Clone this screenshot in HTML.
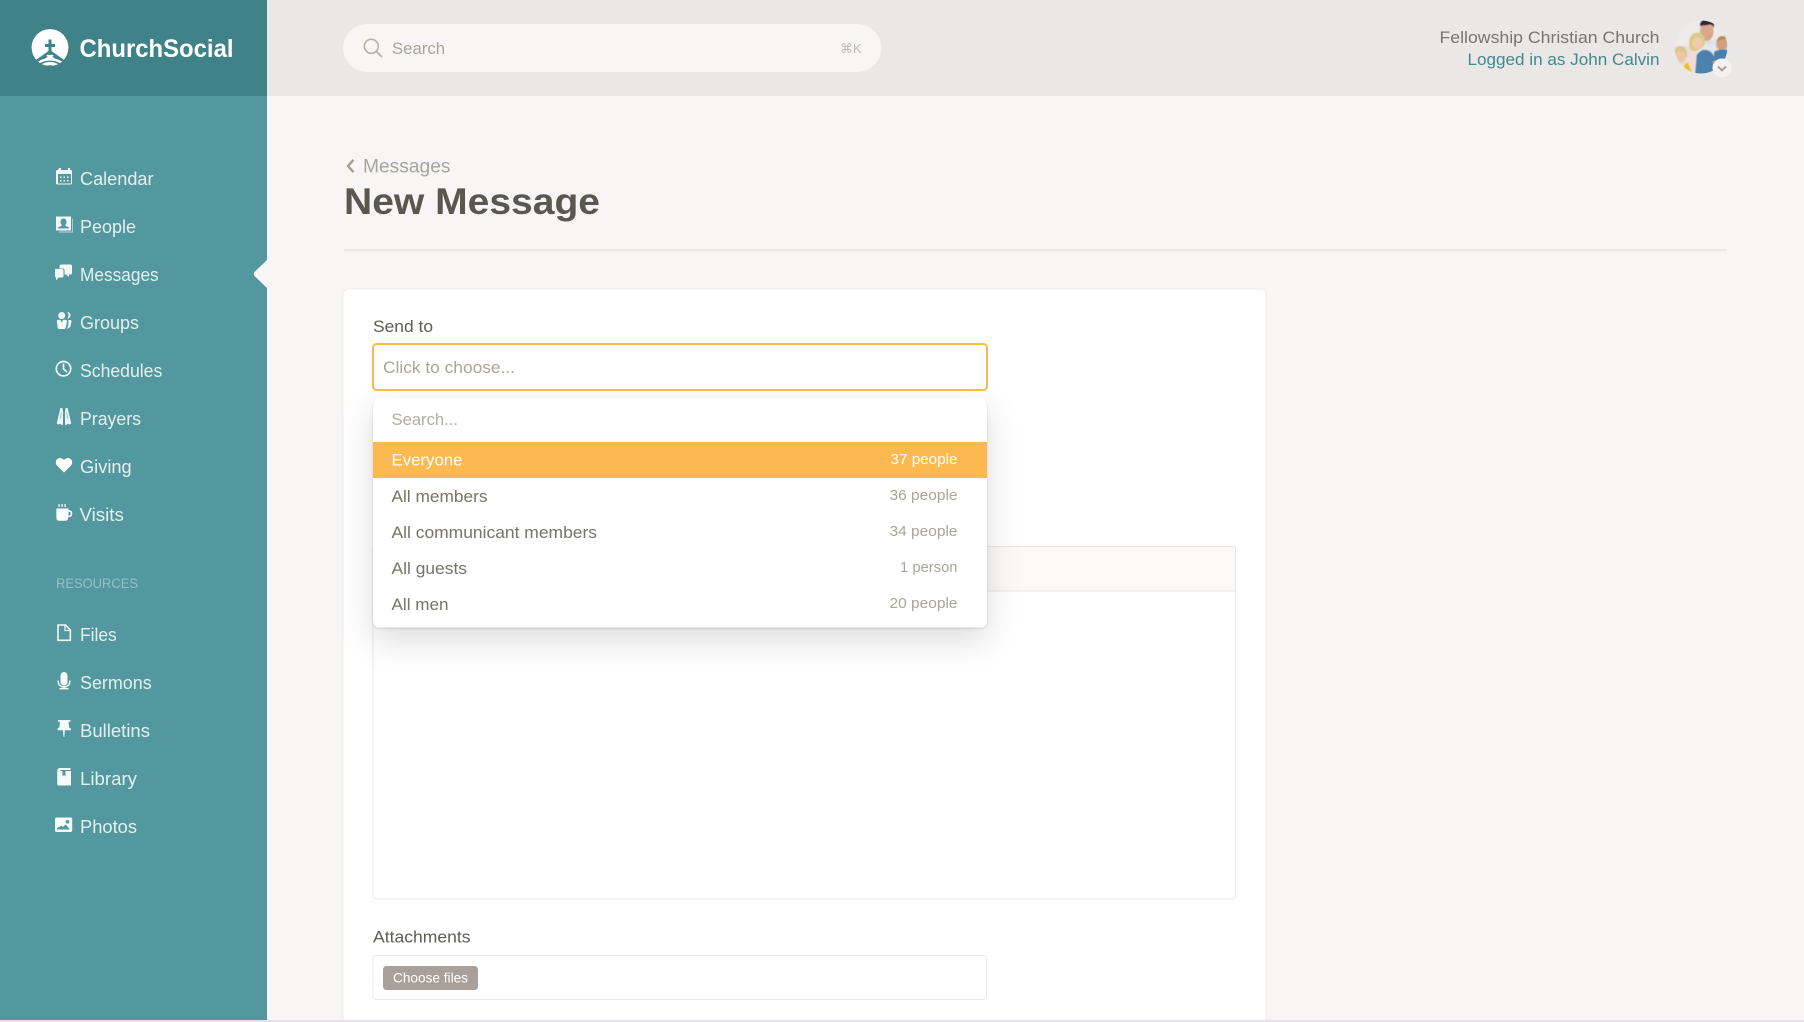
<!DOCTYPE html>
<html lang="en">
<head>
<meta charset="utf-8">
<title>New Message</title>
<style>
html,body{margin:0;padding:0;width:1804px;height:1022px;overflow:hidden;background:#f7f6f4}
svg{display:block}
text{font-family:"Liberation Sans","DejaVu Sans",sans-serif}
.nav{font-size:18px;fill:#e4efef}
.dim{font-size:17px;fill:#77726b}
.cnt{font-size:15px;fill:#aaa49c}
</style>
</head>
<body>
<svg width="1804" height="1022" viewBox="0 0 1804 1022" xmlns="http://www.w3.org/2000/svg">
<defs>
<filter id="dd" x="-15%" y="-20%" width="130%" height="160%">
<feDropShadow dx="0" dy="1" stdDeviation="1" flood-color="#000" flood-opacity=".14"/>
<feDropShadow dx="0" dy="12" stdDeviation="16" flood-color="#000" flood-opacity=".14"/>
</filter>
<filter id="cs" x="-5%" y="-5%" width="110%" height="110%">
<feDropShadow dx="0" dy="0" stdDeviation="1.200" flood-color="#000" flood-opacity=".09"/>
</filter>
<filter id="soft"><feGaussianBlur stdDeviation=".4"/></filter>
<clipPath id="av"><circle cx="1701" cy="47" r="26.500"/></clipPath>
<clipPath id="lg"><circle cx="50" cy="47.500" r="18.500"/></clipPath>
<clipPath id="pg"><rect x="0" y="0" width="1804" height="1020"/></clipPath>
</defs>

<rect width="1804" height="1022" fill="#f7f6f4"/>
<rect y="1020" width="1804" height="2" fill="#e5e3e9"/>
<rect x="267" width="1537" height="96" fill="#ebe7e6"/>

<!-- sidebar -->
<rect width="267" height="1020" fill="#53989f"/>
<rect width="267" height="96" fill="#3f8288"/>
<path d="M267 260v28l-12-11.500q-2.500-2.500 0-5z" fill="#f7f6f4"/>

<!-- logo -->
<g clip-path="url(#lg)">
<circle cx="50" cy="47.500" r="18.500" fill="#fff"/>
<path d="M50 50 33 62l-3 10h40l-3-10z" fill="#3f8288"/>
<path d="M38 61.500Q50 54.500 62 61.500L60.500 63.300Q50 58 39.500 63.300z" fill="#fff"/>
<path d="M41.500 64.300Q50 59.500 58.500 64.300L56.500 66.800Q50 63.500 43.500 66.800z" fill="#fff"/>
<path d="M44.500 59Q50 54 55.500 59L53.800 60Q50 58 46.200 60z" fill="#fff"/>
<path d="M46 56Q47.500 54.500 48.500 54.500L50 53 51.500 54.500Q52.500 54.500 54 56 50 58 46 56z" fill="#fff"/>
</g>
<path d="M48.500 39.500h3v4.500h3.500v3h-3.500v8h-3v-8H45v-3h3.500z" fill="#3f8288"/>
<text x="79.500" y="57" font-size="25" font-weight="700" fill="#fff" textLength="154" lengthAdjust="spacingAndGlyphs">ChurchSocial</text>

<!-- nav text -->
<text class="nav" x="80" y="185" textLength="73.500" lengthAdjust="spacingAndGlyphs">Calendar</text>
<text class="nav" x="80" y="233" textLength="56" lengthAdjust="spacingAndGlyphs">People</text>
<text class="nav" x="80" y="281" textLength="78.700" lengthAdjust="spacingAndGlyphs">Messages</text>
<text class="nav" x="80" y="329" textLength="59" lengthAdjust="spacingAndGlyphs">Groups</text>
<text class="nav" x="80" y="377" textLength="82.300" lengthAdjust="spacingAndGlyphs">Schedules</text>
<text class="nav" x="80" y="425" textLength="61" lengthAdjust="spacingAndGlyphs">Prayers</text>
<text class="nav" x="80" y="473" textLength="51.700" lengthAdjust="spacingAndGlyphs">Giving</text>
<text class="nav" x="79.500" y="521" textLength="44.300" lengthAdjust="spacingAndGlyphs">Visits</text>
<text x="56" y="588" font-size="14" fill="#93c0c4" textLength="82" lengthAdjust="spacingAndGlyphs">RESOURCES</text>
<text class="nav" x="80" y="641" textLength="36.700" lengthAdjust="spacingAndGlyphs">Files</text>
<text class="nav" x="80" y="689" textLength="71.700" lengthAdjust="spacingAndGlyphs">Sermons</text>
<text class="nav" x="80" y="737" textLength="70" lengthAdjust="spacingAndGlyphs">Bulletins</text>
<text class="nav" x="80" y="785" textLength="57" lengthAdjust="spacingAndGlyphs">Library</text>
<text class="nav" x="80" y="833" textLength="57" lengthAdjust="spacingAndGlyphs">Photos</text>

<!-- nav icons -->
<g fill="#f2f8f8">
<!-- calendar -->
<path fill-rule="evenodd" d="M59 168h2v2h7v-2h2v2h.5q1.500 0 1.500 1.500v11.500q0 1.500-1.500 1.500h-13q-1.500 0-1.500-1.500v-11.500q0-1.500 1.500-1.500h.5zM58 174v9.500h13V174z"/>
<path d="M60 176.500h1.500v1.500H60zM63.500 176.500H65v1.500h-1.500zM67 176.500h1.500v1.500H67zM60 180h1.500v1.500H60zM63.500 180H65v1.500h-1.500zM67 180h1.500v1.500H67z"/>
<!-- people -->
<path fill-rule="evenodd" d="M56 216.500h15v14H56zM63.500 218.500a3 3 0 0 0-3 3.200c0 1.400.5 2.500 1.200 3.200l-.3 1.100-3.200 1.300v1.200h10.600v-1.200l-3.200-1.300-.3-1.100c.7-.7 1.200-1.800 1.200-3.200a3 3 0 0 0-3-3.200z"/>
<path d="M72 218.500h.8v14H59v-1h13z" opacity=".7"/>
<!-- messages -->
<path d="M61.500 264.500h9q1.500 0 1.500 1.500v7q0 1.500-1.500 1.500H69v2.500l-3-2.500h-1.500v-4q0-2-2-2h-3V266q0-1.500 2-1.500z"/>
<path d="M56.500 269h5.500q1.500 0 1.500 1.500v5.500q0 1.500-1.500 1.500h-3.500L56 280.500v-3h-.3q-.7-.2-.7-1.500v-5.500q0-2 1.500-2z"/>
<!-- groups -->
<circle cx="61.700" cy="315.500" r="3.500"/>
<path d="M67.300 312c1.900 0 3.200 1.500 3.200 3.300s-1.300 3.200-3.200 3.400c.8-1 1.200-2.100 1.200-3.400s-.4-2.400-1.200-3.300z"/>
<path d="M56.800 321.500q0-1.700 2-1.700h1.500l1.400 3 1.400-3h1.700q2 0 2.200 1.700l-1.200 6q-.3 1.500-1.800 1.500h-4.500q-1.500 0-1.800-1.500z"/>
<path d="M68.300 320h1.700q1.600 0 1.500 1.700l-1.300 5.300-3.200 2q1.300-2.800 1.500-6z"/>
<!-- prayers -->
<path fill-rule="evenodd" d="M60.400 408h1.900l.7 4v12.500l-1.100.6-1.900-1.500-1.900 1-1.300-1.200 1.500-6.500zM60.900 412.500l-.6 6 .8 0 .3-6z"/>
<path fill-rule="evenodd" d="M67.600 408h-1.900l-.7 4v12.500l1.100.6 1.900-1.500 1.900 1 1.300-1.200-1.500-6.500zM67.100 412.500l.6 6-.8 0-.3-6z"/>
</g>
<circle cx="63.500" cy="368.700" r="7.200" fill="none" stroke="#f2f8f8" stroke-width="1.700"/>
<path d="M63.500 363.500v5.500l3.500 3" fill="none" stroke="#f2f8f8" stroke-width="1.700"/>
<g fill="#fff">
<!-- heart -->
<path d="M64 472.500l-6.800-6.600c-2.300-2.500-1.500-6 .8-7.400 2.200-1.200 4.600-.4 6 1.700 1.400-2.100 3.800-2.900 6-1.700 2.300 1.400 3.100 4.900.8 7.400z"/>
<!-- mug -->
<path fill-rule="evenodd" d="M57.500 508.500h11v1.700h.8c2 0 3 1.500 3 3.300s-1 3.500-3 3.500h-.9c-.2 2-1 3.800-3 3.800h-6q-3 0-3-3v-9.300zM68.500 511.700v3.900h.6c1 0 1.600-.8 1.600-2s-.6-1.900-1.600-1.900z"/>
<path d="M58.500 504h1.200v3h-1.200zM61.500 504h1.200v3h-1.200zM64.500 504h1.200v3h-1.200z"/>
</g>
<!-- file -->
<path d="M58 625h7.500l4.800 5v10.300H58z" fill="none" stroke="#f2f8f8" stroke-width="1.600"/>
<path d="M65 625v5.500h5" fill="none" stroke="#f2f8f8" stroke-width="1.200"/>
<g fill="#f5fafa">
<!-- mic -->
<path d="M60.500 675.500a3.500 3.500 0 0 1 7 0v6.500a3.500 3.500 0 0 1-7 0z"/>
<path d="M57.500 680.500h1.500v1.200c0 2.800 2.300 4.300 5 4.300s5-1.500 5-4.300v-1.200h1.500v1.500c0 3.200-2.500 5.300-5.500 5.500v.5h3.500v1.400h-9v-1.400h3.500v-.5c-3-.2-5.500-2.300-5.500-5.500z"/>
<!-- pin -->
<path d="M58 720h12.500v1.800h-2l.7 5.700 1.800 1.300v1.500H64.800l-.5 6.700-.8-.1-.5-6.600H57.500v-1.500l1.800-1.300.7-5.700h-2z"/>
<!-- book -->
<path fill-rule="evenodd" d="M60 768h10.500v2H61q-1 0-1 1h2.500v5.500l1.500-1.500 1.500 1.500V771h5.500v14.500H59q-1.800 0-1.800-1.800V771q0-3 2.800-3z"/>
<!-- photo -->
<path fill-rule="evenodd" d="M56.500 817.500h14q1.700 0 1.700 1.500v11.500q0 1.500-1.700 1.500h-14q-1.500 0-1.500-1.500V819q0-1.500 1.500-1.500zM57 829.500h13l-4.300-5-2.700 2.600-1.500-1.500-1.800 1-2.700 1.500zM67.500 820a1.800 1.800 0 1 0 0 3.600a1.800 1.800 0 0 0 0-3.600z"/>
</g>

<!-- search -->
<rect x="343" y="24" width="538.500" height="48" rx="24" fill="#f7f6f4"/>
<circle cx="371.300" cy="46.300" r="7" fill="none" stroke="#b8b2aa" stroke-width="1.600"/>
<path d="M376.500 51.500l5 5" stroke="#b8b2aa" stroke-width="1.800" stroke-linecap="round"/>
<text x="392" y="54" font-size="17" fill="#aaa49c" textLength="53" lengthAdjust="spacingAndGlyphs">Search</text>
<text x="840" y="53" font-size="13" fill="#c0bbb4" textLength="21.500" lengthAdjust="spacingAndGlyphs">⌘K</text>

<!-- user -->
<text x="1439.500" y="43" font-size="17" fill="#7a756e" textLength="220" lengthAdjust="spacingAndGlyphs">Fellowship Christian Church</text>
<text x="1467.500" y="65" font-size="17" fill="#418a90" textLength="192" lengthAdjust="spacingAndGlyphs">Logged in as John Calvin</text>

<!-- avatar -->
<g clip-path="url(#av)">
<g filter="url(#soft)">
<rect x="1670" y="15" width="62" height="62" fill="#eeeaea"/>
<path d="M1674 46h16v30h-16z" fill="#e6dedd"/>
<path d="M1704 40h24v12h-24z" fill="#dde1e6"/>
<path d="M1701 46l13-3 3 10-16 4z" fill="#e4e6ea"/>
<path d="M1700 32c0-7 3-10 7-10s7 3 6.500 10c-.3 5-3 9-6.500 9s-7-4-7-9z" fill="#d8a78c"/>
<path d="M1716.500 46c-.8-5 1.500-9 5-9 3 0 6 3 6 7s-2 6-5.500 6-5-1.500-5.500-4z" fill="#d2a07c"/>
<path d="M1716.500 42c.5-4 3-6 6-6 2 0 4 1 5 3-3-.5-7 0-11 3z" fill="#b98a50"/>
<path d="M1714 52c3-2.500 9-3 14-2v14l-6 4-8 2z" fill="#4480ae"/>
<path d="M1693 78c-1-14 1-25 10-28 6-1 11 3 12 10l1 18z" fill="#4c82ad"/>
<path d="M1713 61c3-.8 7-.8 10 .5l-2 4-8 2z" fill="#c99c7e"/>
<path d="M1689 43c0-6 3.500-10.500 8-10.500 5 0 8 3.500 8 8 0 3-1 5-3 7l-4 3-6 1c-2-2-3-5-3-8.500z" fill="#dcc987"/>
<ellipse cx="1697.500" cy="43" rx="5" ry="5.700" fill="#f0cbae"/>
<path d="M1686 55c2-3 6-5 11-4l-2 25h-9z" fill="#f0dcd6"/>
<path d="M1674 54c0-5 3-8 6.500-8s6.500 3 6.500 7v4h-13z" fill="#d9c68b"/>
<ellipse cx="1680.500" cy="56.500" rx="5.300" ry="6.300" fill="#eec6a8"/>
<path d="M1684 65l4-3 5 14h-9z" fill="#eac51c"/>
<path d="M1700 26c-.8-4 3-7.500 8-7.500 4 0 7 3.500 6 9-1.200-2-2.300-3-4-3-3.500.8-7 1-10 1.500z" fill="#2c2b33"/>
</g>
</g>
<circle cx="1722" cy="68" r="9.500" fill="#f4f2f0"/>
<path d="M1718 66.500l4 3.800 4-3.800" fill="none" stroke="#a59e94" stroke-width="1.900"/>

<!-- heading -->
<path d="M353.500 159.800l-5.500 6.200 5.500 6.200" fill="none" stroke="#a29c93" stroke-width="2.300"/>
<text x="363" y="172.500" font-size="19" fill="#aaa49c" textLength="87.500" lengthAdjust="spacingAndGlyphs">Messages</text>
<text x="344" y="214" font-size="37" font-weight="700" fill="#5a5650" textLength="256" lengthAdjust="spacingAndGlyphs">New Message</text>
<rect x="344" y="249.500" width="1383" height="1.500" fill="#e8e6e3"/>

<!-- card -->
<g clip-path="url(#pg)">
<rect x="343.500" y="289.500" width="922" height="760" rx="5" fill="#fff" filter="url(#cs)"/>
</g>
<text x="373" y="332" font-size="17" fill="#5f5b55" textLength="60" lengthAdjust="spacingAndGlyphs">Send to</text>

<!-- editor -->
<rect x="373" y="546.500" width="862.500" height="352.500" rx="3" fill="#fff" stroke="#e9e7e4"/>
<path d="M373.500 591V549q0-2.500 3-2.500h856q3 0 3 2.500v42z" fill="#faf9f7" stroke="#e9e7e4"/>

<!-- dropdown -->
<rect x="373" y="397.500" width="614" height="230" rx="6" fill="#fff" filter="url(#dd)"/>
<rect x="373" y="442" width="614" height="36" fill="#fbb950"/>

<rect x="373" y="344" width="614" height="46" rx="3.500" fill="#fff" stroke="#fbb84f" stroke-width="2"/>
<text x="383" y="373" font-size="17" fill="#aaa49c" textLength="132" lengthAdjust="spacingAndGlyphs">Click to choose...</text>

<text x="391.500" y="425" font-size="17" fill="#b3ada6" textLength="66.500" lengthAdjust="spacingAndGlyphs">Search...</text>
<text x="391.500" y="465.500" font-size="17" fill="#fff" textLength="71" lengthAdjust="spacingAndGlyphs">Everyone</text>
<text class="dim" x="391.500" y="502" textLength="96" lengthAdjust="spacingAndGlyphs">All members</text>
<text class="dim" x="391.500" y="538" textLength="205.500" lengthAdjust="spacingAndGlyphs">All communicant members</text>
<text class="dim" x="391.500" y="574" textLength="75.500" lengthAdjust="spacingAndGlyphs">All guests</text>
<text class="dim" x="391.500" y="610" textLength="57" lengthAdjust="spacingAndGlyphs">All men</text>

<text x="890.500" y="464" font-size="15" fill="#fff" textLength="67" lengthAdjust="spacingAndGlyphs">37 people</text>
<text class="cnt" x="889.500" y="500" textLength="68" lengthAdjust="spacingAndGlyphs">36 people</text>
<text class="cnt" x="889.500" y="536" textLength="68" lengthAdjust="spacingAndGlyphs">34 people</text>
<text class="cnt" x="900" y="572" textLength="57.500" lengthAdjust="spacingAndGlyphs">1 person</text>
<text class="cnt" x="889.500" y="608" textLength="68" lengthAdjust="spacingAndGlyphs">20 people</text>

<!-- attachments -->
<text x="373" y="942.700" font-size="17" fill="#5f5b55" textLength="97.500" lengthAdjust="spacingAndGlyphs">Attachments</text>
<rect x="373" y="955.500" width="613.500" height="44" rx="3" fill="#fff" stroke="#ebe9e7"/>
<rect x="383" y="966" width="95" height="24" rx="3.500" fill="#a9a199"/>
<text x="393" y="982.700" font-size="14" fill="#fff" textLength="75" lengthAdjust="spacingAndGlyphs">Choose files</text>
</svg>
</body>
</html>
